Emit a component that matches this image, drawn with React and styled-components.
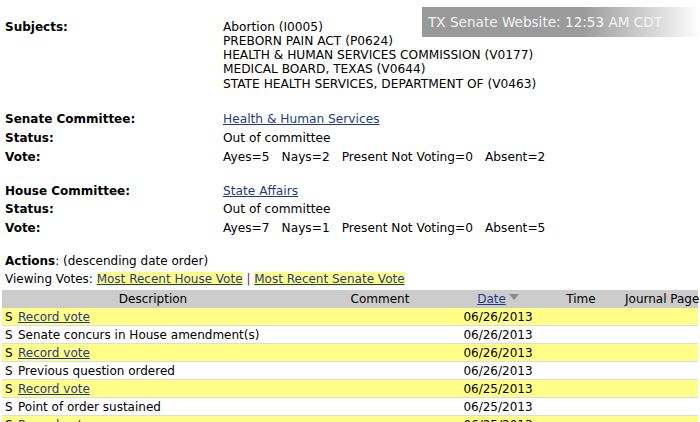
import styled, { createGlobalStyle } from "styled-components";

const subjects = [
  "Abortion (I0005)",
  "PREBORN PAIN ACT (P0624)",
  "HEALTH & HUMAN SERVICES COMMISSION (V0177)",
  "MEDICAL BOARD, TEXAS (V0644)",
  "STATE HEALTH SERVICES, DEPARTMENT OF (V0463)",
];

const actions = [
  { desc: "Record vote", link: true, date: "06/26/2013" },
  { desc: "Senate concurs in House amendment(s)", date: "06/26/2013" },
  { desc: "Record vote", link: true, date: "06/26/2013" },
  { desc: "Previous question ordered", date: "06/26/2013" },
  { desc: "Record vote", link: true, date: "06/25/2013" },
  { desc: "Point of order sustained", date: "06/25/2013" },
  { desc: "Record vote", link: true, date: "06/25/2013" },
];

function Votes({ v }) {
  return (
    <VoteLine>
      <span>Ayes={v[0]}</span>
      <span>Nays={v[1]}</span>
      <span>Present Not Voting={v[2]}</span>
      <span>Absent={v[3]}</span>
    </VoteLine>
  );
}

function App() {
  return (
    <Page>
      <GlobalStyle />
      <Clock>TX Senate Website: 12:53 AM CDT</Clock>
      <Details>
        <Label>Subjects:</Label>
        <SubjectList>
          {subjects.map((s) => (
            <div key={s}>{s}</div>
          ))}
        </SubjectList>
        <Spacer $h={17.5} />
        <Label>Senate Committee:</Label>
        <Value>
          <Link href="#">Health &amp; Human Services</Link>
        </Value>
        <Label>Status:</Label>
        <Value>Out of committee</Value>
        <Label>Vote:</Label>
        <Value>
          <Votes v={[5, 2, 0, 2]} />
        </Value>
        <Spacer $h={15} />
        <Label>House Committee:</Label>
        <Value>
          <Link href="#">State Affairs</Link>
        </Value>
        <Label>Status:</Label>
        <Value>Out of committee</Value>
        <Label>Vote:</Label>
        <Value>
          <Votes v={[7, 1, 0, 5]} />
        </Value>
      </Details>

      <ActionsHead>
        <Line>
          <b>Actions</b>: (descending date order)
        </Line>
        <Line>
          Viewing Votes: <Highlight href="#">Most Recent House Vote</Highlight>
          <Pipe> | </Pipe>
          <Highlight href="#">Most Recent Senate Vote</Highlight>
        </Line>
      </ActionsHead>

      <ActionTable>
        <colgroup>
          <col style={{ width: 302 }} />
          <col style={{ width: 152 }} />
          <col style={{ width: 84 }} />
          <col style={{ width: 82 }} />
          <col style={{ width: 76 }} />
        </colgroup>
        <thead>
          <tr>
            <Th>Description</Th>
            <Th>Comment</Th>
            <Th>
              <Link href="#">Date</Link>
              <Arrow width="10" height="7" viewBox="0 0 10 7">
                <path d="M0 0 L10 0 L5 6 Z" fill="#8a8a8a" />
              </Arrow>
            </Th>
            <Th>Time</Th>
            <Th>Journal Page</Th>
          </tr>
        </thead>
        <tbody>
          {actions.map((a, i) => (
            <Row key={i} $hl={a.link}>
              <Td>
                <Chamber>S</Chamber>
                {a.link ? <Link href="#">{a.desc}</Link> : a.desc}
              </Td>
              <Td />
              <Td $center>{a.date}</Td>
              <Td />
              <Td />
            </Row>
          ))}
        </tbody>
      </ActionTable>
    </Page>
  );
}

export default App;

const GlobalStyle = createGlobalStyle`
  body {
    margin: 0;
    background: #fff;
    overflow: hidden;
  }
`;

const Page = styled.div`
  position: relative;
  padding-top: 17.5px;
  font-family: "DejaVu Sans", Verdana, sans-serif;
  font-size: 12px;
  color: #000;
  width: 700px;
  height: 422px;
  overflow: hidden;
`;

const Clock = styled.div`
  position: absolute;
  top: 7px;
  left: 422px;
  width: 272px;
  height: 30px;
  padding-left: 6px;
  display: flex;
  align-items: center;
  font-size: 13.6px;
  color: #f4f4f4;
  white-space: nowrap;
  background: linear-gradient(to right, #999 0%, #9b9b9b 58%, #fff 100%);
`;

const Details = styled.div`
  display: grid;
  grid-template-columns: 218px 1fr;
  padding-left: 5px;
  font-size: 12.2px;
`;

const Label = styled.div`
  font-weight: bold;
  font-size: 12px;
  padding: 2px 0;
  line-height: 14.7px;
`;

const Value = styled.div`
  padding: 2px 0;
  line-height: 14.7px;
`;

const SubjectList = styled(Value)`
  line-height: 14.3px;
`;

const Spacer = styled.div`
  grid-column: 1 / -1;
  height: ${(p) => p.$h}px;
`;

const VoteLine = styled.div`
  display: flex;
  gap: 12px;
`;

const Link = styled.a`
  color: #1f3a8a;
  text-decoration: underline;
`;

const ActionsHead = styled.div`
  margin-top: 14.5px;
`;

const Line = styled.div`
  padding: 2px 0 2px 5px;
  line-height: 14px;
`;

const Highlight = styled(Link)`
  background: #ffff88;
`;

const Pipe = styled.span`
  color: #8b1a1a;
`;

const ActionTable = styled.table`
  margin: 2px 0 0 2px;
  width: 696px;
  table-layout: fixed;
  border-collapse: collapse;
`;

const Th = styled.th`
  background: #cccccc;
  font-weight: normal;
  height: 18px;
  padding: 0 3px;
  line-height: 14px;
  text-align: center;
  white-space: nowrap;
`;

const Arrow = styled.svg`
  margin-left: 3px;
  vertical-align: 2px;
`;

const Row = styled.tr`
  background: ${(p) => (p.$hl ? "#ffff88" : "#fff")};
  border-bottom: 1px solid #dcdcdc;
`;

const Td = styled.td`
  height: 17px;
  padding: 0 3px;
  line-height: 14px;
  white-space: nowrap;
  text-align: ${(p) => (p.$center ? "center" : "left")};
`;

const Chamber = styled.span`
  display: inline-block;
  width: 13px;
`;
